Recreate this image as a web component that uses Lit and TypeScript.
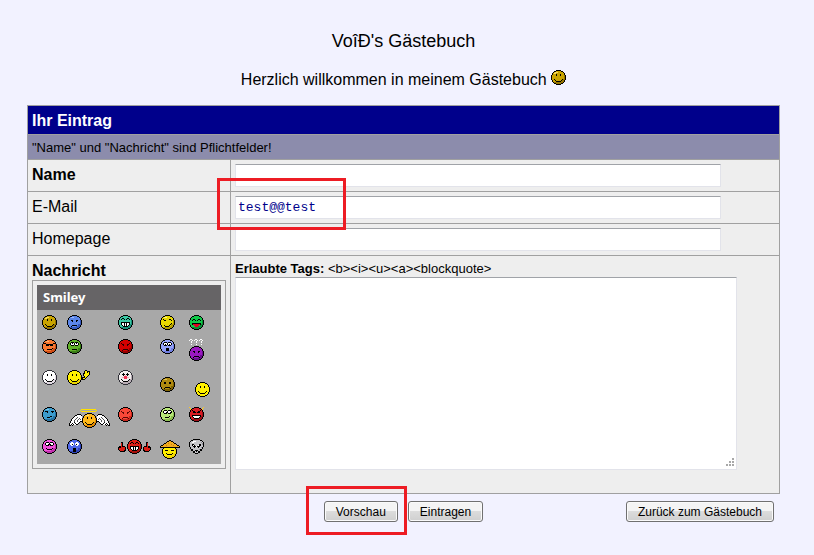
import { LitElement, html, svg, css } from "lit";
import { customElement, property } from "lit/decorators.js";

type Ink = [colour: string, runs: string];

interface Face {
  label: string;
  fill?: string;
  shade?: string;
  rim?: string;
  /** viewBox: x, y, width, height. The head occupies 0 0 15 15. */
  box?: [number, number, number, number];
  back?: Ink[];
  ink: Ink[];
}

const K = "#000";
const W = "#fff";
const HEAD = "M5 0h5v1h2v1h1v1h1v2h1v5h-1v2h-1v1h-1v1h-2v1h-5v-1h-2v-1h-1v-1h-1v-2h-1v-5h1v-2h1v-1h1v-1h2z";
const SKIN = "M5 1h5v1h2v1h1v2h1v5h-1v2h-1v1h-2v1h-5v-1h-2v-1h-1v-2h-1v-5h1v-2h1v-1h2z";
const SHADE = "M13 5h1v5h-1v2h-1v1h-2v1h-5v-1h-2v-1h6v-1h2v-2h2z";

const EYES = "M5 4h1M9 4h1M5 5h1M9 5h1";
const SMILE = "M3 9h1M11 9h1M4 10h1M10 10h1M5 11h5";
const FROWN = "M5 10h5M4 11h1M10 11h1";
const GOGGLE_RIM = "M4 3h3M8 3h3M3 4h1M7 4h1M11 4h1M3 5h1M7 5h1M11 5h1M4 6h3M8 6h3";
const GOGGLES = "M4 4h3M8 4h3M4 5h3M8 5h3";
const ANGRY = "M3 4h1M11 4h1M4 5h2M9 5h2M5 6h1M9 6h1";

const happy: Face = {
  label: "Lächeln", fill: "#c9a400", shade: "#967500",
  ink: [["#f4dc62", "M4 2h3M3 3h2"], [K, EYES + SMILE]],
};

const faces: Face[] = [
  happy,
  { label: "Traurig", fill: "#5c86e8", shade: "#3558bd", ink: [["#9cb8ff", "M4 2h3"], [K, "M4 5h2M9 5h2M5 6h1M9 6h1M5 10h5M4 11h1"]] },
  { label: "Grinsen", fill: "#3cc8a4", shade: "#198f78", ink: [[K, "M4 3h2M9 3h2M3 4h1M6 4h1M8 4h1M11 4h1M3 7h9M3 8h1M6 8h1M8 8h1M11 8h1M3 9h1M6 9h1M8 9h1M11 9h1M4 10h1M6 10h1M8 10h1M10 10h1M5 11h5"], [W, "M4 8h2M7 8h1M9 8h2M4 9h2M7 9h1M9 9h2M5 10h1M7 10h1M9 10h1"]] },
  { label: "Zwinkern", fill: "#e8d800", shade: "#b29c00", ink: [["#fff58a", "M4 2h3"], [K, "M4 5h2M3 4h1M9 4h2M11 5h1M11 8h1M4 10h1M10 9h1M5 11h4M9 10h1"]] },
  { label: "Lachen", fill: "#10c848", shade: "#078c32", ink: [[K, "M4 4h2M9 4h2M3 5h1M6 5h1M8 5h1M11 5h1M3 8h9M3 9h1M11 9h1"], ["#e00020", "M4 9h7M5 10h5M6 11h3"]] },

  { label: "Cool", fill: "#f87830", shade: "#cd4b14", ink: [["#ffb070", "M4 2h3"], [K, "M2 4h2M11 4h2M4 5h7M4 6h3M8 6h3M5 10h5M10 9h1"]] },
  { label: "Augen rollen", fill: "#60b028", shade: "#397d16", ink: [[K, GOGGLE_RIM + "M5 10h5"], [W, GOGGLES], [K, "M5 4h1M9 4h1"]] },
  { label: "Böse", fill: "#d40000", shade: "#970000", ink: [["#300000", ANGRY + FROWN]] },
  { label: "Schockiert", fill: "#94a2fa", shade: "#707ee0", ink: [[K, GOGGLE_RIM + "M6 9h3M6 10h3M6 11h3"], [W, GOGGLES], [K, "M5 5h1M9 5h1"]] },
  { label: "Fragend", fill: "#9a18c0", shade: "#690e8d", box: [0, -7, 15, 22], back: [[W, "M1 -7h2M6 -7h2M11 -7h2M0 -6h1M3 -6h1M5 -6h1M8 -6h1M10 -6h1M13 -6h1M2 -5h1M7 -5h1M12 -5h1M2 -4h1M7 -4h1M12 -4h1M2 -2h1M7 -2h1M12 -2h1"]], ink: [[K, "M4 5h2M9 5h2M5 6h1M9 6h1" + FROWN]] },

  { label: "Blass", fill: "#fff", shade: "#e4dce4", rim: "#303038", ink: [[K, EYES + SMILE]] },
  { label: "Winken", fill: "#fff000", shade: "#ead400", box: [0, 0, 24, 15], back: [[K, "M18 0h2M17 1h1M20 1h3M17 2h1M20 2h1M22 2h1M16 3h2M22 3h1M16 4h1M22 4h1M16 5h1M21 5h1M17 6h1M20 6h1M15 7h3M19 7h1M14 8h2M18 8h1M15 9h3"], ["#fff000", "M18 1h2M18 2h2M21 2h1M18 3h4M17 4h5M17 5h4M18 6h2M18 7h1M16 8h2M14 9h1"]], ink: [[K, EYES + SMILE]] },
  { label: "Clown", fill: "#f2eeee", shade: "#b9adb4", rim: "#303038", ink: [[K, "M5 3h1M9 3h1M4 4h3M8 4h3M5 5h1M9 5h1M3 9h1M11 9h1M4 10h1M10 10h1M5 11h5"], ["#ee3050", "M6 6h3M6 7h3M6 8h3"], ["#f4a0b0", "M4 7h2M9 7h2M7 5h1"]] },
  { label: "Enttäuscht", fill: "#b08a10", shade: "#7d6000", box: [0, -7, 15, 22], ink: [["#dec050", "M4 2h3"], [K, "M4 5h2M9 5h2M4 6h2M9 6h2" + FROWN]] },
  { label: "Freundlich", fill: "#fff000", shade: "#fff000", box: [-6, -12, 21, 27], ink: [[K, EYES + SMILE]] },

  { label: "Skeptisch", fill: "#3c9ccd", shade: "#2470a0", ink: [["#78c8ec", "M4 2h3"], [K, "M3 4h3M9 4h3M5 5h1M10 5h1M8 9h2M5 10h3"]] },
  { label: "Engel", fill: "#ffb818", shade: "#e28a00", box: [-15, -6, 43, 21], ink: [["#ffe070", "M4 2h3"], [K, EYES + SMILE]] },
  { label: "Wütend", fill: "#f84838", shade: "#c9281d", ink: [["#5c0804", ANGRY + FROWN]] },
  { label: "Verlegen", fill: "#b8e878", shade: "#8dbd50", ink: [[K, GOGGLE_RIM + "M5 10h4M9 9h1"], [W, GOGGLES], [K, "M6 5h1M10 5h1"]] },
  { label: "Teufel", fill: "#d81c24", shade: "#9e0e16", back: [["#ffc820", "M0 0h1M14 0h1M1 1h1M13 1h1M1 2h1M13 2h1"]], ink: [[K, "M3 3h1M11 3h1M4 4h2M9 4h2M4 5h3M8 5h3M3 8h9M3 9h1M11 9h1M4 10h1M10 10h1M5 11h5"], [W, "M4 9h7M5 10h5"]] },

  { label: "Verliebt", fill: "#f050d8", shade: "#c02eac", ink: [[K, GOGGLE_RIM + "M4 9h1M10 9h1M5 10h5"], [W, GOGGLES], [K, "M6 5h1M8 5h1"]] },
  { label: "Erstaunt", fill: "#5068e8", shade: "#3044b8", ink: [[W, "M4 3h2M9 3h2M3 4h4M8 4h4M3 5h4M8 5h4M4 6h2M9 6h2"], [K, "M5 5h1M9 5h1M6 9h3M6 10h3M6 11h3M6 12h3"]] },
  { label: "Daumen hoch", fill: "#e02018", shade: "#a9100c", box: [0, 0, 33, 15], ink: [[K, "M4 3h2M9 3h2M3 4h1M6 4h1M8 4h1M11 4h1M3 7h9M3 8h1M6 8h1M8 8h1M11 8h1M3 9h1M6 9h1M8 9h1M11 9h1M4 10h1M6 10h1M8 10h1M10 10h1M5 11h5"], [W, "M4 8h2M7 8h1M9 8h2M4 9h2M7 9h1M9 9h2M5 10h1M7 10h1M9 10h1"]] },
  { label: "Strohhut", fill: "#fff000", shade: "#f0d800", box: [0, -5, 20, 20], ink: [[K, "M3 6h3M9 6h3M4 9h1M10 9h1M5 10h5"]] },
  { label: "Außerirdischer", ink: [] },
];

const ink = (layers: Ink[]) =>
  layers.map(([colour, d]) => svg`<path d=${d} stroke=${colour} transform="translate(0 .5)" />`);

const head = (f: Face) => svg`
  <path d=${HEAD} fill=${f.rim ?? K} />
  <path d=${SKIN} fill=${f.fill ?? "#c9a400"} />
  <path d=${SHADE} fill=${f.shade ?? "#967500"} />`;

const thumb = () => svg`
  <path d="M3 3h2v4h2v1h1v4h-1v1h-5v-1h-1v-1h-1v-3h1v-1h2z" fill="#000" />
  <path d="M3 4h1v4h3v3h-1v1h-4v-1h-1v-2h2z" fill="#dc1c14" />`;

const wing = () => ink([
  [K, "M-5 1h4M-7 2h2M-1 2h1M-8 3h1M-9 4h1M-10 5h1M-11 6h1M-11 7h1M-12 8h1M-2 8h2M-12 9h1M-8 9h1M-3 9h1M-13 10h1M-10 10h1M-7 10h1M-4 10h1M-13 11h1M-11 11h1M-9 11h1M-6 11h2M-13 12h2M-10 12h1"],
  [W, "M-5 2h4M-7 3h7M-8 4h8M-9 5h9M-10 6h10M-10 7h10M-11 8h9M-11 9h3M-7 9h4M-12 10h2M-9 10h2M-6 10h2M-12 11h1M-10 11h1M-8 11h2"],
  ["#555", "M-5 4h1M-6 5h1M-3 5h1M-7 6h1M-4 6h1M-8 7h1M-5 7h1M-2 6h1M-8 8h1M-5 8h1"],
]);

function drawing(f: Face) {
  switch (f.label) {
    case "Daumen hoch":
      return svg`${thumb()}<g transform="translate(33 0) scale(-1 1)">${thumb()}</g>
        <g transform="translate(9 0)">${head(f)}${ink(f.ink)}</g>`;
    case "Engel":
      return svg`${ink([["#ffe000", "M-1 -4h15M-2 -3h1M14 -3h1M-1 -2h15"]])}
        ${wing()}<g transform="translate(15 0) scale(-1 1)">${wing()}</g>
        ${head(f)}${ink(f.ink)}`;
    case "Strohhut":
      return svg`<g transform="translate(2 0)">${head(f)}${ink(f.ink)}</g>
        <path d="M9 -4h2v1h2v1h1v1h2v1h1v1h2v1h1v2h-20v-2h1v-1h2v-1h1v-1h2v-1h1v-1h2z" fill="#000" />
        <path d="M9 -3h2v1h2v1h1v1h2v1h1v1h2v1h-18v-1h2v-1h1v-1h2v-1h1v-1h2z" fill="#f2ac20" />
        ${ink([["#c88010", "M8 -1h1M11 0h1M6 1h1M13 1h1"]])}`;
    case "Außerirdischer":
      return svg`
        <path d="M4 0h7v1h2v1h1v1h1v5h-1v2h-1v2h-2v2h-2v1h-3v-1h-2v-2h-2v-2h-1v-2h-1v-5h1v-1h1v-1h2z" fill="#000" />
        <path d="M4 1h7v1h2v1h1v5h-1v2h-2v2h-2v2h-3v-2h-2v-2h-2v-2h-1v-5h1v-1h2z" fill="#c4c4c8" />
        ${ink([
          [W, "M4 2h3M3 3h2M7 7h1"],
          ["#8c8c94", "M12 3h1M13 4h1M13 5h1M12 8h1M10 10h1"],
          [K, "M3 5h2M10 5h2M3 6h3M9 6h3M4 7h3M8 7h3M5 8h1M9 8h1M6 11h3M7 12h1"],
          [W, "M4 6h1M9 6h1"],
        ])}`;
    default:
      return svg`${ink(f.back ?? [])}${head(f)}${ink(f.ink)}`;
  }
}

function smiley(f: Face) {
  const [x, y, w, h] = f.box ?? [0, 0, 15, 15];
  return html`<svg
    role="img" aria-label=${f.label} width=${w} height=${h}
    viewBox="${x} ${y} ${w} ${h}" fill="none" shape-rendering="crispEdges"
  >${drawing(f)}</svg>`;
}

@customElement("smiley-panel")
export class SmileyPanel extends LitElement {
  static styles = css`
    :host {
      display: block;
      border: 1px solid #a0a0a0;
      padding: 4px;
    }
    .title {
      margin: 0;
      padding: 0 6px;
      background: #666466;
      color: #fff;
      font: bold 13px/25px "Noto Sans", "Open Sans", sans-serif;
    }
    .grid {
      display: grid;
      grid-template-columns: 25px 51px 42px 29px 1fr;
      grid-template-rows: 24px 31px 37px 32px 25px;
      padding: 5px 0 0 5px;
      background: #a8a8a8;
    }
    .pick {
      justify-self: start;
      align-self: start;
    }
    svg {
      display: block;
    }
  `;

  render() {
    return html`
      <h2 class="title">Smiley</h2>
      <div class="grid">
        ${faces.map((f) => html`<a class="pick" href="#nachricht">${smiley(f)}</a>`)}
      </div>
    `;
  }
}

@customElement("app-root")
export class AppRoot extends LitElement {
  @property() email = "test@@test";

  static styles = css`
    :host {
      display: block;
      box-sizing: border-box;
      min-height: 100vh;
      padding: 29px 34px 20px 27px;
      background: #f2f2ff;
      color: #000;
      font: 16px/20px "Liberation Sans", Arial, sans-serif;
    }
    header {
      text-align: center;
      margin-bottom: 13px;
    }
    h1 {
      margin: 0 0 15px;
      font-size: 18px;
      line-height: 24px;
      font-weight: normal;
    }
    .welcome {
      margin: 0;
      line-height: 24px;
    }
    .welcome svg {
      vertical-align: 0;
    }
    .entry {
      width: 100%;
      table-layout: fixed;
      border-collapse: collapse;
    }
    .labels {
      width: 203px;
    }
    th,
    td {
      border: 1px solid #a0a0a0;
      padding: 4px;
      text-align: left;
      vertical-align: top;
      font-weight: normal;
      background: #eeeeee;
    }
    th,
    .notice {
      padding: 5px 4px 3px;
    }
    .heading {
      background: #00008b;
      color: #fff;
      font-weight: bold;
    }
    .notice {
      background: #8c8cac;
      font-size: 13px;
      line-height: 16px;
    }
    .required {
      font-weight: bold;
    }
    .marked {
      position: relative;
    }
    .marker {
      position: absolute;
      box-sizing: border-box;
      border: 3px solid #ed1c24;
      pointer-events: none;
    }
    .marker-email {
      left: -14px;
      top: -14px;
      width: 129px;
      height: 52px;
    }
    .marker-preview {
      inset: -15px -9px -13px -18px;
    }
    input,
    textarea {
      display: block;
      box-sizing: border-box;
      margin: 0;
      border: 1px solid #e2e3ea;
      border-top-color: #a0a3a8;
      border-radius: 0;
      background: #fff;
      color: #00008b;
      font: 13px/16px "Liberation Mono", "Courier New", monospace;
    }
    input {
      width: 90%;
      height: 23px;
      padding: 1px 2px;
    }
    textarea {
      width: 93%;
      height: 193px;
      padding: 2px;
    }
    textarea::-webkit-resizer {
      --dot: linear-gradient(#a8a8a8, #a8a8a8);
      background: var(--dot) 11px 4px, var(--dot) 8px 7px, var(--dot) 11px 7px,
        var(--dot) 5px 10px, var(--dot) 8px 10px, var(--dot) 11px 10px;
      background-size: 2px 2px;
      background-repeat: no-repeat;
    }
    .message td,
    .message th {
      padding-bottom: 23px;
    }
    .message label {
      display: block;
      margin-bottom: -1px;
    }
    .tags {
      margin: 0;
      font-size: 13px;
      line-height: 17px;
    }
    .actions {
      display: grid;
      grid-template-columns: 1fr auto 1fr;
      margin-top: 7px;
      padding: 0 6px;
    }
    .main {
      grid-column: 2;
      display: flex;
      gap: 10px;
    }
    .back {
      justify-self: end;
    }
    button {
      display: block;
      box-sizing: border-box;
      height: 21px;
      padding: 0 11px;
      border: 1px solid #707070;
      border-radius: 3px;
      background: linear-gradient(#f4f4f4 0 45%, #dcdcdc 50%, #cfcfcf);
      box-shadow: inset 0 0 0 1px #fafafa;
      color: #000;
      font: 12px/16px "Liberation Sans", Arial, sans-serif;
    }
  `;

  render() {
    return html`
      <header>
        <h1>VoîÐ's Gästebuch</h1>
        <p class="welcome">Herzlich willkommen in meinem Gästebuch ${smiley(happy)}</p>
      </header>
      <form @submit=${(e: Event) => e.preventDefault()}>
        <table class="entry">
          <colgroup><col class="labels" /><col /></colgroup>
          <tbody>
            <tr><th class="heading" colspan="2">Ihr Eintrag</th></tr>
            <tr><td class="notice" colspan="2">"Name" und "Nachricht" sind Pflichtfelder!</td></tr>
            <tr>
              <th><label class="required" for="name">Name</label></th>
              <td><input id="name" type="text" /></td>
            </tr>
            <tr>
              <th><label for="email">E-Mail</label></th>
              <td class="marked">
                <input id="email" type="text" .value=${this.email} />
                <span class="marker marker-email"></span>
              </td>
            </tr>
            <tr>
              <th><label for="homepage">Homepage</label></th>
              <td><input id="homepage" type="text" /></td>
            </tr>
            <tr class="message">
              <th>
                <label class="required" for="nachricht">Nachricht</label>
                <smiley-panel></smiley-panel>
              </th>
              <td>
                <p class="tags"><b>Erlaubte Tags:</b> &lt;b&gt;&lt;i&gt;&lt;u&gt;&lt;a&gt;&lt;blockquote&gt;</p>
                <textarea id="nachricht"></textarea>
              </td>
            </tr>
          </tbody>
        </table>
        <div class="actions">
          <div class="main">
            <div class="marked">
              <button type="submit">Vorschau</button>
              <span class="marker marker-preview"></span>
            </div>
            <button type="submit">Eintragen</button>
          </div>
          <button class="back" type="button">Zurück zum Gästebuch</button>
        </div>
      </form>
    `;
  }
}
